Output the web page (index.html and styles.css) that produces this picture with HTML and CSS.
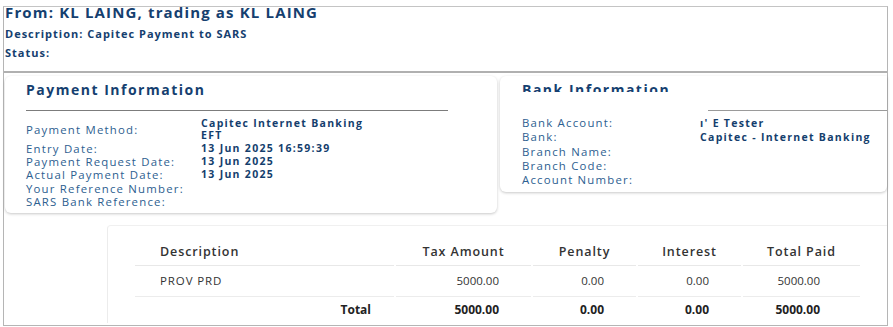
FILE: index.html
```html
<!DOCTYPE html>
<html lang="en">
  <head>
    <meta charset="UTF-8" />
    <meta name="viewport" content="width=device-width, initial-scale=1.0" />
    <title>Payment Detail</title>
    <link rel="stylesheet" href="styles.css">
  </head>
  <body>
    <div class="frame">

      <!-- Header -->
      <header class="head">
        <h1>From: KL LAING, trading as KL LAING</h1>
        <p>Description: Capitec Payment to SARS</p>
        <p>Status:</p>
      </header>

      <!-- Info cards -->
      <div class="cards">
        <section class="card pay-card">
          <h2>Payment Information</h2>
          <div class="card-rule"></div>
          <div class="info-row first">
            <span class="info-label">Payment Method:</span>
            <span class="info-value">Capitec Internet Banking<br>EFT</span>
          </div>
          <div class="info-row">
            <span class="info-label">Entry Date:</span>
            <span class="info-value">13 Jun 2025 16:59:39</span>
          </div>
          <div class="info-row">
            <span class="info-label">Payment Request Date:</span>
            <span class="info-value">13 Jun 2025</span>
          </div>
          <div class="info-row">
            <span class="info-label">Actual Payment Date:</span>
            <span class="info-value">13 Jun 2025</span>
          </div>
          <div class="info-row">
            <span class="info-label">Your Reference Number:</span>
            <span class="info-value"></span>
          </div>
          <div class="info-row">
            <span class="info-label">SARS Bank Reference:</span>
            <span class="info-value"></span>
          </div>
        </section>

        <section class="card bank-card">
          <h2>Bank Information</h2>
          <div class="bank-rule"></div>
          <div class="info-row cut">
            <span class="info-label">Bank Account:</span>
            <span class="info-value">ı' E Tester</span>
          </div>
          <div class="info-row">
            <span class="info-label">Bank:</span>
            <span class="info-value">Capitec - Internet Banking</span>
          </div>
          <div class="info-row">
            <span class="info-label">Branch Name:</span>
            <span class="info-value"></span>
          </div>
          <div class="info-row">
            <span class="info-label">Branch Code:</span>
            <span class="info-value"></span>
          </div>
          <div class="info-row">
            <span class="info-label">Account Number:</span>
            <span class="info-value"></span>
          </div>
        </section>
      </div>

      <!-- Amounts table -->
      <section class="amounts">
        <table class="amount-table">
          <colgroup>
            <col class="c-desc">
            <col class="c-tax">
            <col class="c-small">
            <col class="c-small">
            <col class="c-total">
          </colgroup>
          <thead>
            <tr>
              <th class="left">Description</th>
              <th>Tax Amount</th>
              <th>Penalty</th>
              <th>Interest</th>
              <th>Total Paid</th>
            </tr>
          </thead>
          <tbody>
            <tr>
              <td class="left">PROV PRD</td>
              <td>5000.00</td>
              <td>0.00</td>
              <td>0.00</td>
              <td class="last">5000.00</td>
            </tr>
            <tr class="total-row">
              <td>Total</td>
              <td>5000.00</td>
              <td>0.00</td>
              <td>0.00</td>
              <td class="last">5000.00</td>
            </tr>
          </tbody>
        </table>
      </section>
    </div>
  </body>
</html>
```

FILE: styles.css
```css
/* Reset */
* {
  margin: 0;
  padding: 0;
  box-sizing: border-box;
  font-family: "Open Sans", "Liberation Sans", sans-serif;
}

body {
  background: #fff;
  padding: 6px 0 0 3px;
}

/* Outer frame */
.frame {
  width: 885px;
  height: 320px;
  border: 1px solid #b5b5b5;
  border-top-color: #c4c4c4;
}

/* Header */
.head {
  height: 66px;
  padding: 0 0 0 1px;
  border-bottom: 2px solid #b0b0b0;
  color: #15406f;
}

.head h1 {
  font-size: 15px;
  font-weight: 700;
  line-height: 11px;
  letter-spacing: 1.15px;
}

.head p {
  font-size: 11px;
  font-weight: 700;
  line-height: 14px;
  letter-spacing: 1px;
}

.head h1 + p {
  margin-top: 9px;
}

.head p + p {
  margin-top: 5px;
}

/* Cards */
.cards {
  display: flex;
  align-items: flex-start;
  gap: 3px;
  margin: 3px 0 0 1px;
}

.card {
  background: #fff;
  border-radius: 6px;
  box-shadow: 0 1px 3px rgba(0, 0, 0, 0.22);
}

.card h2 {
  font-size: 14px;
  font-weight: 700;
  line-height: 18px;
  color: #153f70;
  letter-spacing: 1.5px;
}

.pay-card {
  width: 492px;
  height: 137px;
  padding: 5px 0 0 21px;
}

.card-rule {
  width: 422px;
  height: 1px;
  background: #7c7c7c;
  margin: 11px 0 6px;
}

.info-row {
  display: flex;
  align-items: center;
  min-height: 13.3px;
  line-height: 13.3px;
  font-family: "DejaVu Sans", "Open Sans", sans-serif;
}

.info-label {
  width: 175px;
  flex-shrink: 0;
  color: #2d6090;
  font-size: 11.4px;
  letter-spacing: 1.2px;
}

.info-value {
  color: #143e6d;
  font-weight: 700;
  font-size: 10.5px;
  letter-spacing: 1.3px;
}

.info-row.first {
  height: 24.8px;
}

.info-row.first .info-value {
  line-height: 12.4px;
}

.bank-card {
  flex: 1;
  height: 116px;
  padding: 5px 0 0 22px;
  border-radius: 6px 0 6px 6px;
}

.bank-card h2 {
  height: 11px;
  overflow: hidden;
}

.bank-rule {
  height: 1px;
  background: #9a9a9a;
  margin: 18px 0 5px 186px;
}

.bank-card .info-row {
  min-height: 14.3px;
  line-height: 14.3px;
}

.bank-card .info-label {
  width: 178px;
}

.info-row.cut {
  clip-path: inset(3px 0 0 0);
}

/* Amounts */
.amounts {
  margin: 12px 0 0 103px;
  height: 98px;
  border-top: 1px solid #f0f0f0;
  border-left: 1px solid #ececec;
  border-radius: 4px 0 0 0;
  padding: 11px 0 0 25px;
}

.amount-table {
  table-layout: fixed;
  width: 729px;
  border-collapse: separate;
  border-spacing: 2px 0;
  color: #333;
}

.c-desc { width: 259px; }
.c-tax { width: 135px; }
.c-small { width: 103px; }
.c-total { width: 117px; }

.amount-table th {
  font-size: 12.5px;
  font-weight: 600;
  line-height: 16px;
  padding: 7px 0 5px;
  text-align: center;
  border-bottom: 1px solid #e8e8e8;
  letter-spacing: 0.9px;
}

.amount-table td {
  font-size: 11.5px;
  line-height: 16px;
  padding: 7px 32px 7px 0;
  text-align: right;
  border-bottom: 1px solid #ececec;
}

.amount-table .left {
  text-align: left;
  padding-left: 25px;
}

.amount-table td.left {
  letter-spacing: 0.9px;
}

.amount-table td.last {
  padding-right: 40px;
}

.total-row td {
  font-weight: 700;
  font-size: 12px;
  color: #222;
  padding-top: 5px;
  padding-bottom: 5px;
  border-bottom: none;
}

.total-row td:first-child {
  padding-right: 23px;
}
```
